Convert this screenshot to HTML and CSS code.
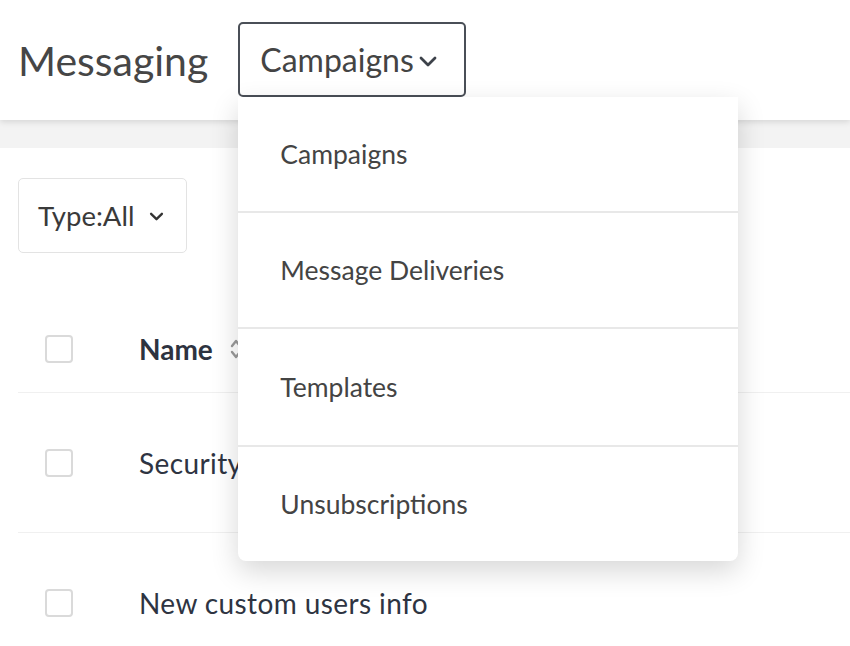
FILE: index.html
```html
<!DOCTYPE html>
<html>
<head>
<meta charset="utf-8">
<link rel="stylesheet" href="styles.css">
</head>
<body>
<div class="page">
  <header class="topbar">
    <h1 class="title">Messaging</h1>
    <div class="nav-select">
      <button class="nav-btn">Campaigns<svg class="chev" viewBox="0 0 18 11" width="18" height="11"><path d="M2 2l7 7 7-7" fill="none" stroke="currentColor" stroke-width="2.8" stroke-linecap="round" stroke-linejoin="round"/></svg></button>
      <ul class="menu">
        <li class="menu-item">Campaigns</li>
        <li class="menu-item">Message Deliveries</li>
        <li class="menu-item">Templates</li>
        <li class="menu-item">Unsubscriptions</li>
      </ul>
    </div>
  </header>
  <div class="band"></div>
  <main class="content">
    <button class="filter">Type:All<svg class="chev-sm" viewBox="0 0 16 10" width="15" height="9"><path d="M2 2l6 6 6-6" fill="none" stroke="currentColor" stroke-width="2.6" stroke-linecap="round" stroke-linejoin="round"/></svg></button>
    <div class="table">
      <div class="row head">
        <span class="check"></span>
        <span class="col-name">Name <svg class="sort" viewBox="0 0 14 26" width="14" height="26"><path d="M3 10l4-5 4 5M3 16l4 5 4-5" fill="none" stroke="#9a9a9a" stroke-width="2.4" stroke-linecap="round" stroke-linejoin="round"/></svg></span>
      </div>
      <div class="row">
        <span class="check"></span>
        <span class="cell">Security</span>
      </div>
      <div class="row">
        <span class="check"></span>
        <span class="cell">New custom users info</span>
      </div>
    </div>
  </main>
</div>
</body>
</html>
```
FILE: styles.css
```css
* { box-sizing: border-box; }
html, body { margin: 0; padding: 0; background: #fff; }
body { font-family: "Lato", "Liberation Sans", sans-serif; color: #444; overflow: hidden; }
.page { width: 850px; height: 646px; position: relative; }

.topbar {
  height: 120px;
  display: flex;
  align-items: flex-start;
  padding-left: 18px;
  background: #fff;
  position: relative;
  z-index: 2;
  box-shadow: 0 2px 6px rgba(0,0,0,0.12);
}
.title {
  margin: 36px 0 0 0;
  font-size: 41px;
  font-weight: 400;
  color: #464646;
  line-height: 50px;
}
.nav-select { position: relative; margin: 22px 0 0 30px; }
.nav-btn {
  width: 228px;
  height: 75px;
  border: 2px solid #4a4f57;
  border-radius: 5px;
  background: #fff;
  font-family: inherit;
  font-size: 32px;
  color: #444;
  display: flex;
  align-items: center;
  padding: 0 0 0 20px;
  gap: 5px;
}
.chev { color: #3d424a; margin-top: 3px; }

.menu {
  position: absolute;
  top: 75px;
  left: 0;
  width: 500px;
  margin: 0;
  padding: 0;
  list-style: none;
  background: #fff;
  border-radius: 0 0 8px 8px;
  box-shadow: 0 10px 28px rgba(0,0,0,0.16);
  z-index: 5;
}
.menu-item {
  height: 116px;
  display: flex;
  align-items: center;
  padding-left: 42px;
  font-size: 26.5px;
  color: #444;
  border-bottom: 2px solid #e8e8e8;
}
.menu-item:nth-child(3) { height: 118px; }
.menu-item:last-child { border-bottom: 0; height: 114px; }

.band { height: 28px; background: #f3f3f3; }

.content { padding: 30px 0 0 18px; }
.filter {
  width: 169px;
  height: 75px;
  border: 1px solid #e3e3e3;
  border-radius: 5px;
  background: #fff;
  font-family: inherit;
  font-size: 27.5px;
  color: #3a3a3a;
  display: flex;
  align-items: center;
  padding: 0 0 0 19px;
  gap: 15px;
}
.chev-sm { color: #333; margin-top: 2px; }

.table { margin-top: 53px; }
.row {
  display: flex;
  align-items: center;
  height: 140px;
  border-bottom: 1px solid #f0f0f0;
  padding-left: 27px;
}
.row.head { height: 87px; }
.check {
  width: 28px;
  height: 28px;
  border: 2px solid #dadada;
  border-radius: 4px;
  flex: none;
  margin-right: 66px;
}
.col-name {
  font-weight: 700;
  font-size: 28px;
  color: #2d3340;
  display: flex;
  align-items: center;
  gap: 16px;
}
.cell { font-size: 28px; color: #2e3442; letter-spacing: 0.4px; }
```
